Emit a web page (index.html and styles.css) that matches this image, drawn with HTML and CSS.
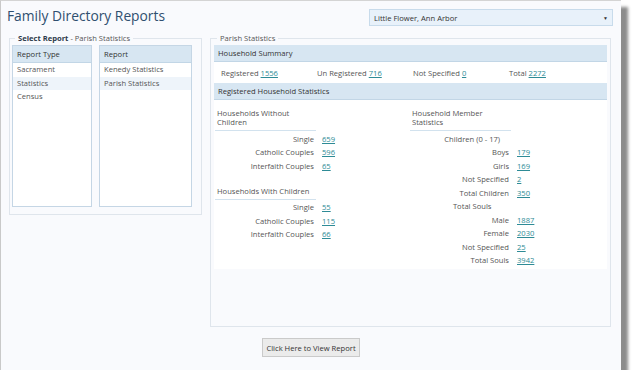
FILE: index.html
```html
<!DOCTYPE html>
<html lang="en">
<head>
  <meta charset="UTF-8">
  <title>Family Directory Reports</title>
  <link rel="stylesheet" href="styles.css">
</head>
<body>
  <div class="window">
    <div class="top">
      <h1>Family Directory Reports</h1>
      <div class="select">
        <span>Little Flower, Ann Arbor</span>
        <span class="caret">&#9660;</span>
      </div>
    </div>

    <div class="main">
      <fieldset class="pick">
        <legend><b>Select Report</b> - Parish Statistics</legend>
        <div class="list types">
          <div class="list-head">Report Type</div>
          <ul>
            <li>Sacrament</li>
            <li class="sel">Statistics</li>
            <li>Census</li>
          </ul>
        </div>
        <div class="list reports">
          <div class="list-head">Report</div>
          <ul>
            <li>Kenedy Statistics</li>
            <li class="sel">Parish Statistics</li>
          </ul>
        </div>
      </fieldset>

      <fieldset class="stats">
        <legend>Parish Statistics</legend>
        <div class="panel">
          <div class="bar">Household Summary</div>
          <div class="summary">
            <span>Registered <a href="#">1556</a></span>
            <span>Un Registered <a href="#">716</a></span>
            <span>Not Specified <a href="#">0</a></span>
            <span>Total <a href="#">2272</a></span>
          </div>
          <div class="bar">Registered Household Statistics</div>
          <div class="cols">
            <div class="col">
              <div class="group-title">Households Without Children</div>
              <div class="rows">
                <span class="lbl">Single</span><a href="#">659</a>
                <span class="lbl">Catholic Couples</span><a href="#">596</a>
                <span class="lbl">Interfaith Couples</span><a href="#">65</a>
              </div>
              <div class="group-title next">Households With Children</div>
              <div class="rows">
                <span class="lbl">Single</span><a href="#">55</a>
                <span class="lbl">Catholic Couples</span><a href="#">115</a>
                <span class="lbl">Interfaith Couples</span><a href="#">66</a>
              </div>
            </div>
            <div class="col">
              <div class="group-title">Household Member Statistics</div>
              <div class="rows">
                <span class="sub">Children (0 - 17)</span>
                <span class="lbl">Boys</span><a href="#">179</a>
                <span class="lbl">Girls</span><a href="#">169</a>
                <span class="lbl">Not Specified</span><a href="#">2</a>
                <span class="lbl">Total Children</span><a href="#">350</a>
                <span class="sub">Total Souls</span>
                <span class="lbl">Male</span><a href="#">1887</a>
                <span class="lbl">Female</span><a href="#">2030</a>
                <span class="lbl">Not Specified</span><a href="#">25</a>
                <span class="lbl">Total Souls</span><a href="#">3942</a>
              </div>
            </div>
          </div>
        </div>
      </fieldset>
    </div>

    <div class="actions">
      <button class="view">Click Here to View Report</button>
    </div>
  </div>
</body>
</html>
```

FILE: styles.css
```css
:root {
  --page: #f9fafd;
  --head: #d7e6f2;
  --head-line: #c2d6e6;
  --line: #dfe5ec;
  --text: #555;
  --link: #2e8b96;
  --title: #2f4f6f;
}
* { box-sizing: border-box; margin: 0; padding: 0; }
body {
  background: #fff;
  font-family: 'Open Sans', 'Liberation Sans', sans-serif;
  font-size: 7.6px;
  color: var(--text);
}
.window {
  width: 621px;
  height: 370px;
  background: var(--page);
  border-left: 1px solid #c9c9c9;
  border-top: 1px solid #d4d4d4;
  box-shadow: 7px 7px 3px #8c8c8c;
}
.top {
  display: flex;
  justify-content: space-between;
  align-items: flex-start;
  padding: 4px 8px 0 6px;
  height: 32px;
}
h1 {
  font-size: 13.8px;
  font-weight: normal;
  color: var(--title);
  line-height: 22px;
}
.select {
  width: 244px;
  height: 17px;
  margin-top: 4px;
  display: flex;
  justify-content: space-between;
  align-items: center;
  padding: 0 4px;
  background: #e8f1fa;
  border: 1px solid #c8dbeb;
  color: #333;
}
.caret { font-size: 5px; color: #333; }

.main {
  display: flex;
  align-items: flex-start;
  gap: 8px;
  padding-left: 8px;
}
fieldset {
  border: 1px solid var(--line);
  min-width: 0;
}
legend {
  margin-left: 3px;
  padding: 0 3px;
  line-height: 10px;
}
legend b { color: #2d3b4a; }

.pick {
  width: 193px;
  height: 182px;
  display: flex;
  gap: 7px;
  padding: 2px 9px 6px 2px;
}
.list {
  background: #fff;
  border: 1px solid #c5d6e5;
  height: 162px;
}
.types { width: 80px; }
.reports { flex: 1; }
.list-head {
  background: var(--head);
  border-bottom: 1px solid var(--head-line);
  height: 17px;
  line-height: 16px;
  padding-left: 4px;
  color: #333;
}
.list ul { list-style: none; }
.list li {
  height: 13.5px;
  line-height: 13.5px;
  padding-left: 4px;
}
.list li.sel { background: #eef4fa; }

.stats {
  width: 401px;
  height: 294px;
  padding: 2px 3px 0 3px;
}
.panel {
  background: #fff;
  height: 224px;
}
.bar {
  background: var(--head);
  border-bottom: 1px solid var(--head-line);
  height: 17px;
  line-height: 16px;
  padding-left: 4px;
  color: #333;
}
.summary {
  display: flex;
  height: 21px;
  align-items: center;
  padding-left: 7px;
}
.summary span { width: 96px; }
a { color: var(--link); }

.cols {
  display: flex;
  padding-top: 9px;
}
.col { width: 196px; }
.col:first-child { padding-left: 1px; }
.group-title {
  width: 101px;
  line-height: 9px;
  padding: 0 0 3px 2px;
  border-bottom: 1px solid #d2e2ee;
  margin-bottom: 1px;
}
.group-title.next { margin-top: 14px; }
.rows {
  display: inline-grid;
  grid-template-columns: 99px auto;
  column-gap: 8px;
  grid-auto-rows: 13.5px;
  align-items: center;
}
.lbl { text-align: right; }
.sub {
  grid-column: 1 / -1;
  text-align: center;
}

.actions {
  display: flex;
  justify-content: center;
  padding: 11px 0 0 0;
}
button.view {
  font-family: inherit;
  font-size: 7.6px;
  color: #333;
  background: #ebebeb;
  border: 1px solid #cacaca;
  height: 19px;
  padding: 0 3px;
  cursor: pointer;
}
```
